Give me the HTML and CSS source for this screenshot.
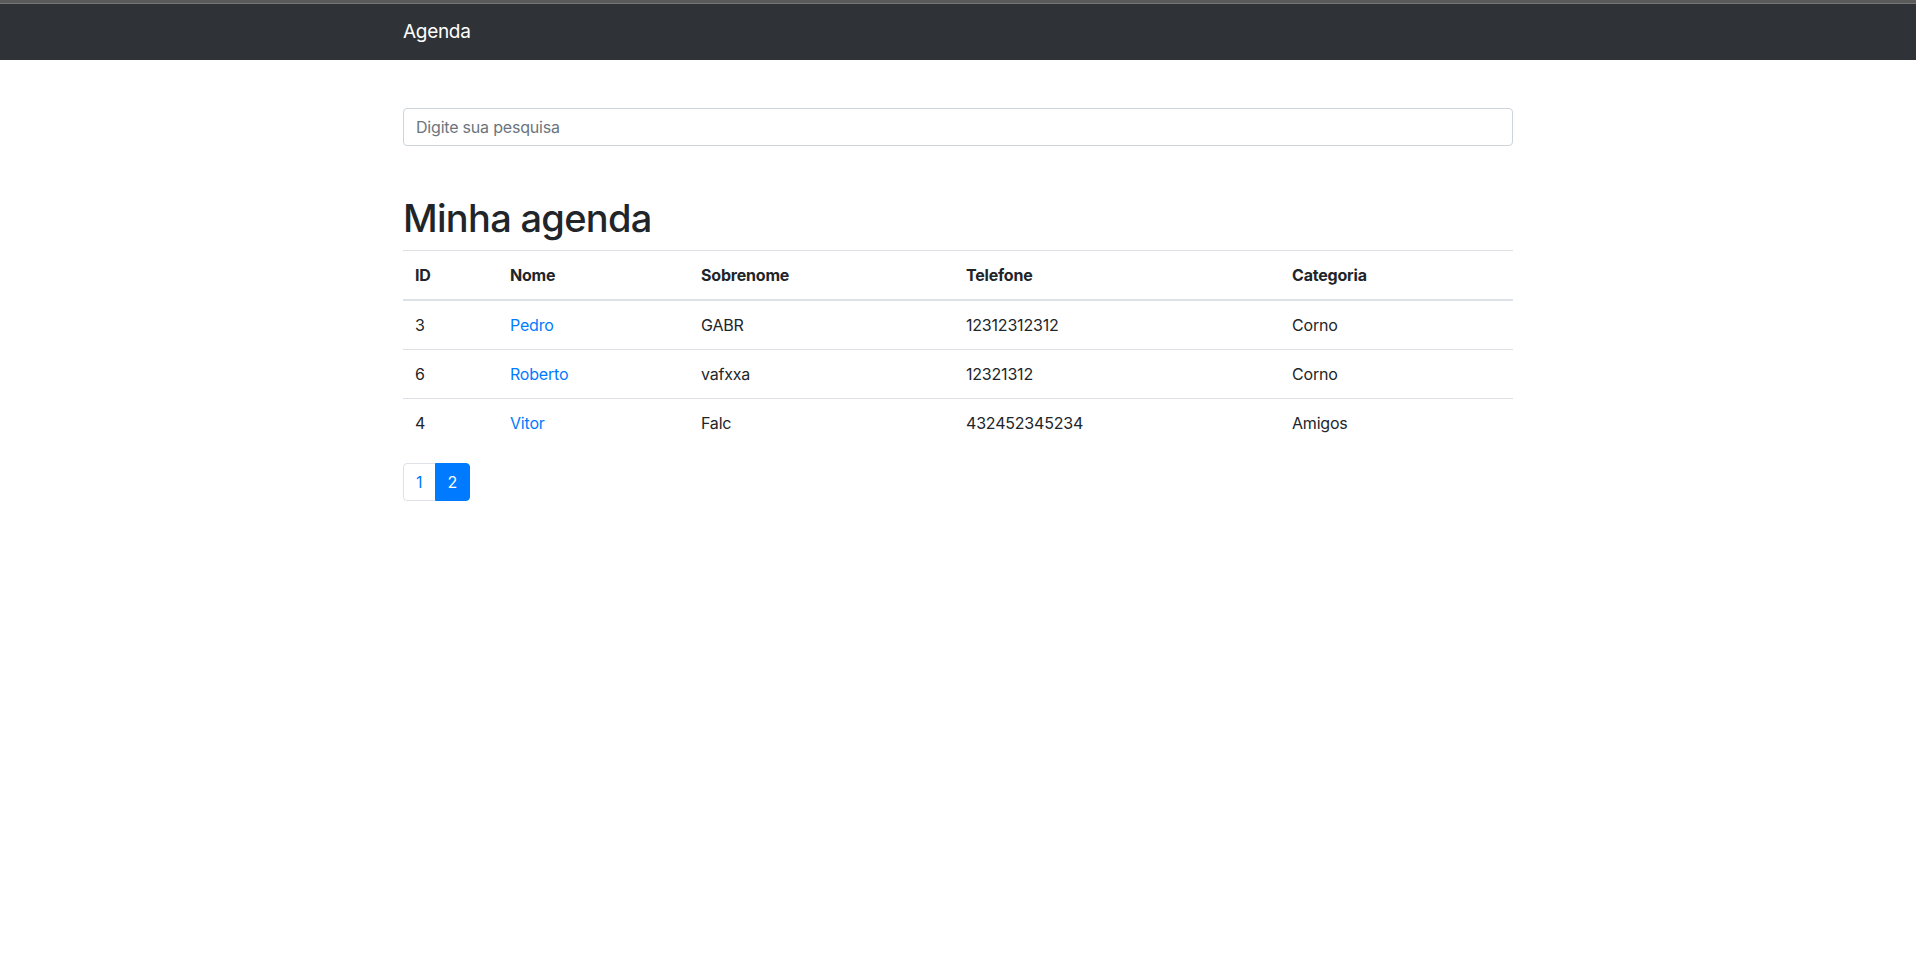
FILE: index.html
```html
<!DOCTYPE html>
<html lang="pt-BR">
<head>
<meta charset="utf-8">
<title>Agenda</title>
<link rel="stylesheet" href="styles.css">
</head>
<body>
<div class="topstrip"></div>
<nav class="navbar">
  <div class="container">
    <a class="brand" href="#">Agenda</a>
  </div>
</nav>
<main class="container main">
  <form class="search">
    <input class="form-control" type="text" placeholder="Digite sua pesquisa">
  </form>
  <h1 class="title">Minha agenda</h1>
  <table class="table">
    <thead>
      <tr>
        <th class="c-id">ID</th>
        <th class="c-nome">Nome</th>
        <th class="c-sob">Sobrenome</th>
        <th class="c-tel">Telefone</th>
        <th class="c-cat">Categoria</th>
      </tr>
    </thead>
    <tbody>
      <tr><td>3</td><td><a href="#">Pedro</a></td><td>GABR</td><td>12312312312</td><td>Corno</td></tr>
      <tr><td>6</td><td><a href="#">Roberto</a></td><td>vafxxa</td><td>12321312</td><td>Corno</td></tr>
      <tr><td>4</td><td><a href="#">Vitor</a></td><td>Falc</td><td>432452345234</td><td>Amigos</td></tr>
    </tbody>
  </table>
  <ul class="pagination">
    <li class="page-item"><a class="page-link" href="#">1</a></li>
    <li class="page-item active"><span class="page-link">2</span></li>
  </ul>
</main>
</body>
</html>
```
FILE: styles.css
```css
* { box-sizing: border-box; }
html, body { margin: 0; padding: 0; }
body {
  font-family: Inter, "Noto Sans", "Liberation Sans", sans-serif;
  font-size: 16px;
  line-height: 1.5;
  color: #212529;
  background: #fff;
}
.topstrip {
  height: 4px;
  background: #5b5b5b;
  border-bottom: 1px solid #767676;
}
.container {
  width: 1140px;
  margin: 0 auto;
  padding: 0 15px;
}
.navbar {
  background: #2f3337;
  padding: 8px 0;
  height: 56px;
}
.brand {
  display: inline-block;
  color: #fff;
  text-decoration: none;
  font-size: 19px;
  line-height: 30px;
  padding: 5px 0;
  letter-spacing: -0.3px;
}
.main { padding-top: 48px; }
.search { margin: 0 0 48px 0; }
.form-control {
  display: block;
  width: 100%;
  height: 38px;
  padding: 6px 12px;
  font-family: inherit;
  font-size: 16px;
  line-height: 1.5;
  color: #495057;
  background: #fff;
  border: 1px solid #ced4da;
  border-radius: 4px;
  outline: none;
  letter-spacing: -0.2px;
}
.form-control::placeholder { color: #6c757d; opacity: 1; }
.title {
  margin: 0 0 8px 0;
  font-size: 38px;
  font-weight: 500;
  line-height: 48px;
  letter-spacing: -0.7px;
}
.table {
  width: 100%;
  border-collapse: collapse;
  margin-bottom: 16px;
  table-layout: fixed;
}
.table th, .table td {
  padding: 12px;
  text-align: left;
  vertical-align: top;
  border-top: 1px solid #dee2e6;
  letter-spacing: -0.2px;
}
.table th { font-weight: 700; }
.table thead th { border-bottom: 2px solid #dee2e6; }
.table a { color: #007bff; text-decoration: none; }
.c-id { width: 95px; }
.c-nome { width: 191px; }
.c-sob { width: 265px; }
.c-tel { width: 326px; }
.c-cat { width: 233px; }
.pagination {
  display: flex;
  list-style: none;
  margin: 0;
  padding: 0;
}
.page-link {
  display: block;
  padding: 8px 12px;
  line-height: 20px;
  color: #007bff;
  text-decoration: none;
  background: #fff;
  border: 1px solid #dee2e6;
}
.page-item:first-child .page-link {
  border-radius: 4px 0 0 4px;
}
.page-item + .page-item .page-link { margin-left: -1px; }
.page-item:last-child .page-link { border-radius: 0 4px 4px 0; }
.page-item.active .page-link {
  color: #fff;
  background: #007bff;
  border-color: #007bff;
}
```
